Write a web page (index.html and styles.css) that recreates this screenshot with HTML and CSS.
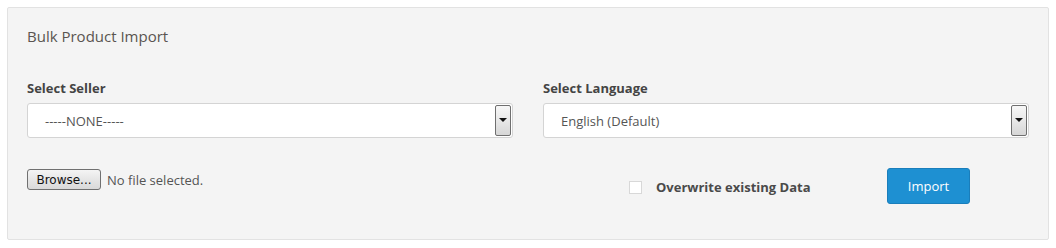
FILE: index.html
```html
<!DOCTYPE html>
<html>
<head>
<meta charset="utf-8">
<link rel="stylesheet" href="styles.css">
</head>
<body>
<div class="page">
  <div class="panel">
    <div class="panel-title">Bulk Product Import</div>
    <div class="row row-selects">
      <div class="col col-6">
        <div class="field-label">Select Seller</div>
        <div class="select">
          <span class="select-text">-----NONE-----</span>
          <span class="select-arrow"><span class="tri"></span></span>
        </div>
      </div>
      <div class="col col-6">
        <div class="field-label">Select Language</div>
        <div class="select">
          <span class="select-text">English (Default)</span>
          <span class="select-arrow"><span class="tri"></span></span>
        </div>
      </div>
    </div>
    <div class="row row-actions">
      <div class="col col-6">
        <div class="file-input">
          <span class="browse-btn">Browse...</span>
          <span class="file-name">No file selected.</span>
        </div>
      </div>
      <div class="col col-check">
        <label class="check">
          <span class="check-box"></span>
          <span class="check-label">Overwrite existing Data</span>
        </label>
      </div>
      <div class="col col-btn">
        <span class="import-btn">Import</span>
      </div>
    </div>
  </div>
</div>
</body>
</html>
```

FILE: styles.css
```css
* { box-sizing: border-box; }
html, body { margin: 0; padding: 0; background: #fff; }
body {
  font-family: "Open Sans", "Noto Sans", sans-serif;
  font-size: 13px;
  color: #555;
}
.page { padding: 7px 7px 0 7px; }
.panel {
  background: #f4f4f4;
  border: 1px solid #e2e2e2;
  border-radius: 2px;
  padding: 18px 19px 19px;
  height: 233px;
}
.panel-title {
  font-size: 15px;
  line-height: 20px;
  color: #5a5450;
}
.row {
  display: grid;
  grid-template-columns: repeat(12, 1fr);
  margin: 0 -15px;
}
.col { padding: 0 15px; }
.col-6 { grid-column: span 6; }
.col-check { grid-column: 8 / span 3; }
.col-btn { grid-column: 11 / span 2; }
.row-selects { margin-top: 32px; }
.field-label {
  font-weight: bold;
  font-size: 13px;
  line-height: 20px;
  color: #444;
  margin-bottom: 5px;
}
.select {
  display: flex;
  align-items: stretch;
  height: 35px;
  background: #fff;
  border: 1px solid #d4d4d4;
  border-radius: 3px;
  padding: 1px;
}
.select-text {
  flex: 1;
  display: flex;
  align-items: center;
  padding-left: 16px;
  font-size: 13px;
  color: #555;
}
.select-arrow {
  width: 16px;
  border: 1px solid #6f6f6f;
  border-radius: 2px;
  background: linear-gradient(#f7f7f7, #e8e8e8 50%, #d6d6d6);
  display: flex;
  align-items: center;
  justify-content: center;
  padding-bottom: 2px;
}
.tri {
  width: 0;
  height: 0;
  border-left: 4px solid transparent;
  border-right: 4px solid transparent;
  border-top: 4px solid #111;
}
.row-actions { margin-top: 30px; }
.file-input {
  display: flex;
  align-items: center;
  margin-top: 1px;
}
.browse-btn {
  display: inline-flex;
  align-items: center;
  justify-content: center;
  width: 74px;
  height: 21px;
  border: 1px solid #707070;
  border-radius: 3px;
  background: linear-gradient(#f4f4f4, #e6e6e6 50%, #d9d9d9);
  font-family: "DejaVu Sans", "Open Sans", sans-serif;
  font-size: 12px;
  color: #111;
}
.file-name {
  margin-left: 6px;
  font-size: 13px;
  color: #555;
}
.check {
  display: flex;
  align-items: center;
  height: 36px;
  padding-top: 2px;
}
.check-box {
  width: 13px;
  height: 13px;
  background: #fff;
  border: 1px solid #d8d8d8;
}
.check-label {
  margin-left: 14px;
  font-weight: bold;
  font-size: 13px;
  color: #4a4a4a;
}
.import-btn {
  display: inline-flex;
  align-items: center;
  justify-content: center;
  width: 83px;
  height: 36px;
  background: #1e90d2;
  border: 1px solid #1a7ebb;
  border-radius: 3px;
  color: #fff;
  font-size: 13px;
}
```
